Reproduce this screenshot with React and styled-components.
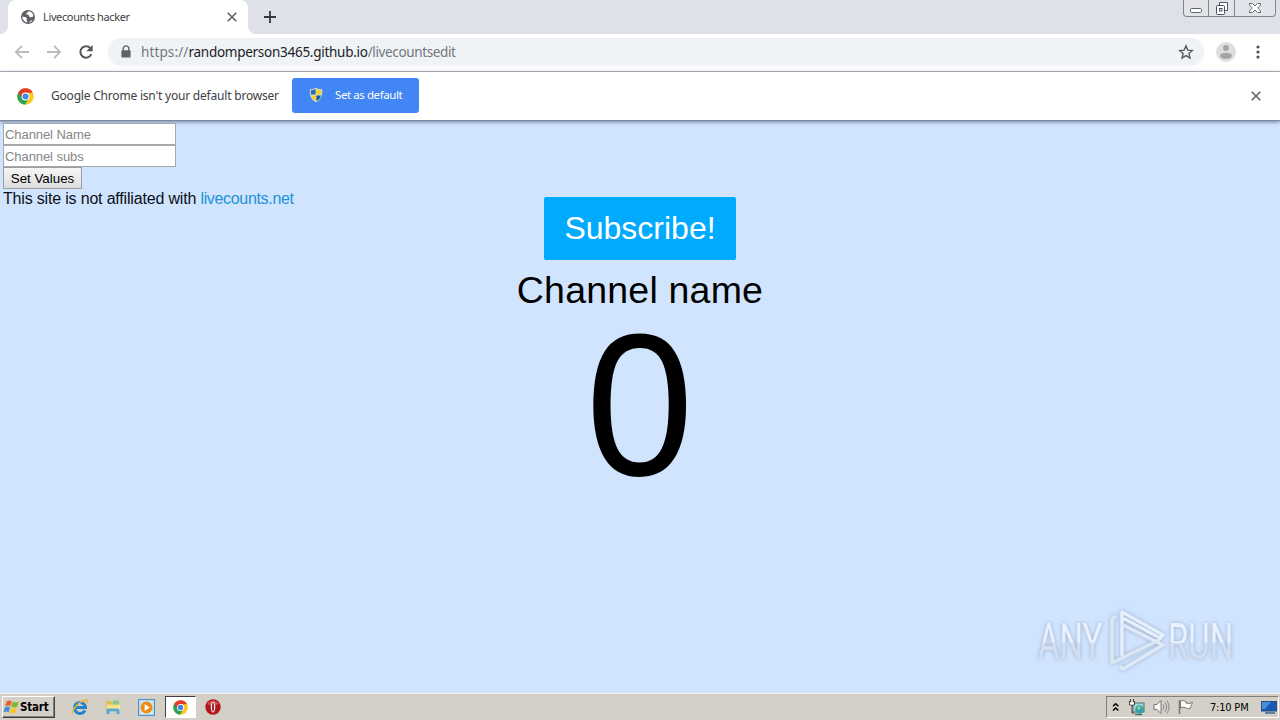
import React from 'react';
import styled, { createGlobalStyle } from 'styled-components';

const GlobalStyle = createGlobalStyle`
	* {
		box-sizing: border-box;
	}
	body {
		margin: 0;
		overflow: hidden;
		font-family: 'Liberation Sans', Arial, sans-serif;
	}
	svg {
		display: block;
		flex: none;
	}
`;

const Screen = styled.div`
	display: flex;
	flex-direction: column;
	width: 1280px;
	height: 720px;
	background: #d1e4fe;
`;

/* browser window */

const TabStrip = styled.div`
	display: flex;
	align-items: flex-start;
	height: 34px;
	background: #dee1e8;
`;

const TabCorner = styled.div`
	width: 8px;
	height: 34px;
	background: white;
`;

const CornerFill = styled.div`
	width: 8px;
	height: 34px;
	background: #dee1e8;
	border-bottom-right-radius: ${(props) => (props.$left ? '8px' : '0')};
	border-bottom-left-radius: ${(props) => (props.$left ? '0' : '8px')};
`;

const Tab = styled.div`
	display: flex;
	align-items: center;
	width: 240px;
	height: 34px;
	padding: 0 11px 0 12px;
	background: white;
	border-radius: 8px 8px 0 0;
`;

const TabTitle = styled.span`
	flex: 1;
	margin-left: 7px;
	font-family: 'Noto Sans', sans-serif;
	font-size: 11px;
	letter-spacing: -0.36px;
	line-height: 16px;
	color: #3c4043;
	white-space: nowrap;
`;

const NewTab = styled.div`
	display: flex;
	align-items: center;
	height: 34px;
	margin-left: 8px;
`;

const WindowButtons = styled.div`
	display: flex;
	height: 17px;
	margin-left: auto;
	margin-right: 4px;
	border: 1px solid #80868f;
	border-top: 0;
	border-radius: 0 0 4px 4px;
	background: #e2e4e9;
`;

const WindowButton = styled.div`
	display: flex;
	justify-content: center;
	width: ${(props) => props.$width}px;
	border-left: ${(props) => (props.$first ? '0' : '1px solid #80868f')};
`;

const Toolbar = styled.div`
	display: flex;
	align-items: center;
	height: 38px;
	padding: 0 14px 2px;
	background: white;
	border-bottom: 1px solid #b4b5b8;
`;

const NavIcon = styled.div`
	display: flex;
	width: 32px;
`;

const AddressBar = styled.div`
	display: flex;
	align-items: center;
	width: 1096px;
	height: 28px;
	margin-left: -2px;
	padding: 0 10px 0 12px;
	background: #f0f3f6;
	border-radius: 14px;
`;

const Url = styled.span`
	flex: 1;
	margin-left: 9px;
	font-family: 'Noto Sans', sans-serif;
	font-size: 13.5px;
	letter-spacing: -0.37px;
	line-height: 18px;
	color: #73777c;
	white-space: nowrap;
`;

const Scheme = styled.span`
	letter-spacing: 0.12px;
`;

const Host = styled.span`
	letter-spacing: -0.27px;
	color: #202124;
`;

const Profile = styled.div`
	display: flex;
	margin-left: 12px;
	margin-right: 20px;
`;

const InfoBar = styled.div`
	display: flex;
	align-items: center;
	height: 49px;
	padding: 0 19px 0 17px;
	background: white;
	border-bottom: 1px solid #80899a;
	box-shadow: 0 1px 4px rgba(40, 60, 100, 0.6);
`;

const InfoText = styled.span`
	width: 241px;
	margin-left: 17px;
	font-family: 'Noto Sans', sans-serif;
	font-size: 12px;
	letter-spacing: -0.2px;
	line-height: 18px;
	color: #3c4043;
	white-space: nowrap;
`;

const DefaultButton = styled.button`
	display: flex;
	align-items: center;
	width: 127px;
	height: 35px;
	margin-right: auto;
	margin-bottom: 2px;
	padding: 0 0 0 17px;
	border: 0;
	border-radius: 3px;
	background: #4285f4;
	color: white;
	font-family: 'Noto Sans', sans-serif;
	font-size: 11.5px;
	letter-spacing: -0.42px;
	white-space: nowrap;
`;

const ButtonLabel = styled.span`
	margin-left: 12px;
	margin-bottom: 2px;
`;

/* page content */

const Page = styled.main`
	position: relative;
	height: 572px;
	padding: 2px 3px 0;
`;

const Form = styled.form`
	display: flex;
	flex-direction: column;
	align-items: flex-start;
`;

const Field = styled.input`
	width: 173px;
	height: 22px;
	padding: 1px;
	border: 1px solid #a5a8ad;
	border-radius: 0;
	background: white;
	font-family: 'Liberation Sans', Arial, sans-serif;
	font-size: 13px;
	letter-spacing: -0.07px;
	&::placeholder {
		color: #858585;
	}
`;

const SetButton = styled.button`
	width: 79px;
	height: 22px;
	padding: 0;
	border: 1px solid #9c9ea2;
	border-radius: 0;
	background: linear-gradient(#f6f6f6, #dddddd);
	color: black;
	font-family: 'Liberation Sans', Arial, sans-serif;
	font-size: 13.33px;
	white-space: nowrap;
`;

const Notice = styled.div`
	font-size: 16px;
	line-height: 19px;
	letter-spacing: -0.18px;
	color: #0b1020;
`;

const Link = styled.a`
	letter-spacing: -0.33px;
	color: #1a93d8;
`;

const Counter = styled.section`
	display: flex;
	flex-direction: column;
	align-items: center;
	margin-top: -11px;
`;

const Subscribe = styled.button`
	width: 192px;
	height: 63px;
	padding: 0;
	border: 0;
	border-radius: 2px;
	background: #00aaff;
	color: white;
	font-family: 'Liberation Sans', Arial, sans-serif;
	font-size: 32px;
`;

const ChannelName = styled.div`
	margin-top: 9px;
	font-size: 37.5px;
	line-height: 43px;
	letter-spacing: 0.2px;
	color: black;
`;

const Count = styled.div`
	margin-top: -7px;
	font-size: 200px;
	line-height: 200px;
	color: black;
	transform: scale(0.97, 1.01);
`;

const Watermark = styled.div`
	position: absolute;
	left: 1038px;
	top: 489px;
	display: flex;
	align-items: center;
	height: 62px;
	filter: drop-shadow(0 0 2px rgba(110, 130, 165, 0.55));
`;

const WatermarkSlot = styled.div`
	display: flex;
	width: ${(props) => props.$width}px;
	margin-top: 2px;
`;

const WatermarkWord = styled.span`
	flex: none;
	font-family: Roboto, sans-serif;
	font-size: 50px;
	line-height: 62px;
	background: linear-gradient(#e9f2fe 50%, #d3dfef 52%);
	background-clip: text;
	color: transparent;
	transform: scaleX(${(props) => props.$scale});
	transform-origin: 0 50%;
`;

/* taskbar */

const Taskbar = styled.footer`
	display: flex;
	align-items: center;
	height: 27px;
	padding: 0 1px 0 1px;
	background: #d4d0c8;
	border-top: 1px solid #f2f1ed;
`;

const StartButton = styled.button`
	display: flex;
	align-items: center;
	width: 53px;
	height: 22px;
	margin-left: 1px;
	padding: 0;
	border: 1px solid;
	border-color: #ffffff #404040 #404040 #ffffff;
	box-shadow: inset -1px -1px 0 #808080;
	background: #d4d0c8;
	color: black;
	font-family: 'DejaVu Sans Condensed', 'DejaVu Sans', sans-serif;
	font-size: 11.5px;
	font-weight: bold;
	letter-spacing: -0.2px;
`;

const QuickLaunch = styled.div`
	display: flex;
	align-items: center;
	margin-left: 8px;
`;

const QuickItem = styled.div`
	display: flex;
	align-items: center;
	justify-content: center;
	width: ${(props) => (props.$active ? '31px' : '33.5px')};
	height: 22px;
	margin: 0 ${(props) => (props.$active ? '1px' : '0')};
	background: ${(props) => (props.$active ? 'white' : 'none')};
	border: ${(props) => (props.$active ? '1px solid #404040' : '0')};
	border-right-color: white;
	border-bottom-color: white;
`;

const Tray = styled.div`
	display: flex;
	align-items: center;
	width: 173px;
	height: 22px;
	margin-left: auto;
	padding-left: 5px;
	border: 1px solid;
	border-color: #808080 white white #808080;
`;

const TrayIcons = styled.div`
	display: flex;
	align-items: center;
	gap: 8px;
`;

const Clock = styled.span`
	width: 51px;
	margin-left: 15px;
	font-family: 'DejaVu Sans Condensed', sans-serif;
	font-size: 11px;
	letter-spacing: -0.2px;
	color: black;
	white-space: nowrap;
`;

const Cross = ({ size = 8, color = '#5f6368' }) => (
	<svg width={size} height={size} viewBox="0 0 8 8">
		<path d="M.6.6l6.8 6.8M7.4.6L.6 7.4" stroke={color} strokeWidth="1.3" />
	</svg>
);

const GlobeIcon = () => (
	<svg width="16" height="16" viewBox="0 0 16 16">
		<circle cx="8" cy="8" r="7" fill="#5c6065" />
		<path d="M8.5 2.2c-.5 1.7-2.3 1-2.2 2.6.1 1.3 1.7.4 2.5 1.4.7 1 .1 2 1.6 2 1.2 0 2-1.2 3.2-.7a5.7 5.7 0 0 0-3-4.8zM2.3 7.4c1.4.6 3.3.3 4.2 1.3.8.9-.4 2 .4 2.7.5.4.3 1.3.2 2A5.6 5.6 0 0 1 2.3 7.4zM9.2 13.7c.1-1.4 1.4-1.1 1.7-2.2l1.8-.6a6 6 0 0 1-3.5 2.8z" fill="white" />
	</svg>
);

const ArrowIcon = ({ flip }) => (
	<svg width="16" height="16" viewBox="0 0 16 16">
		<path d="M15 8H2M8 1.8L1.8 8 8 14.2" transform={flip ? 'matrix(-1 0 0 1 16 0)' : undefined} fill="none" stroke="#babcbe" strokeWidth="1.8" />
	</svg>
);

const ReloadIcon = () => (
	<svg width="16" height="16" viewBox="0 0 16 16">
		<path d="M13.3 10.2A5.7 5.7 0 1 1 12.2 4" fill="none" stroke="#505459" strokeWidth="2" />
		<path d="M14.6 1v6.2H8.4z" fill="#505459" />
	</svg>
);

const LockIcon = () => (
	<svg width="12" height="14" viewBox="0 0 12 14">
		<path d="M3.2 6V3.7a2.8 2.8 0 0 1 5.6 0V6" fill="none" stroke="#5f6368" strokeWidth="1.4" />
		<rect x="1.4" y="5.3" width="9.2" height="7.2" rx="1" fill="#5f6368" />
	</svg>
);

const StarIcon = () => (
	<svg width="16" height="16" viewBox="0 0 16 16">
		<path d="M8 1.9l1.8 4.2 4.6.4-3.5 3 1.1 4.5L8 11.6 4 14l1.1-4.5-3.5-3 4.6-.4z" fill="none" stroke="#565a60" strokeWidth="1.4" />
	</svg>
);

const ProfileIcon = () => (
	<svg width="20" height="20" viewBox="0 0 20 20">
		<circle cx="10" cy="10" r="10" fill="#dedede" />
		<circle cx="10" cy="6" r="3" fill="#a5a5a5" />
		<ellipse cx="10" cy="13.8" rx="6" ry="3.1" fill="#a5a5a5" />
	</svg>
);

const ChromeIcon = ({ size = 17 }) => (
	<svg width={size} height={size} viewBox="0 0 18 18">
		<circle cx="9" cy="9" r="8.7" fill="#fbc918" />
		<path d="M9 9L1.5 4.6A8.7 8.7 0 0 0 8.3 17.7L12.7 11z" fill="#26a45a" />
		<path d="M9 5h7.8A8.7 8.7 0 0 0 1.5 4.6l3.9 6.5z" fill="#e23b2e" />
		<circle cx="9" cy="9" r="4.2" fill="white" />
		<circle cx="9" cy="9" r="3.2" fill="#4285e8" />
	</svg>
);

const ShieldIcon = () => (
	<svg width="14" height="16" viewBox="0 0 14 16">
		<path d="M7 .7c2 1.3 4 1.5 6.2 1.5.4 6.2-1.3 10.5-6.2 13C2.1 12.7.4 8.4.8 2.2 3 2.2 5 2 7 .7z" fill="#d8dccc" />
		<path d="M6.6 2C5 2.900 3.500 3.200 1.900 3.300v4.300h4.700z" fill="#2668b8" />
		<path d="M7.400 2c1.600.9 3.100 1.200 4.700 1.300v4.300H7.400z" fill="#f6d022" />
		<path d="M6.600 8.400H2.100c.5 2.500 1.900 4.300 4.500 5.600z" fill="#f6d022" />
		<path d="M7.400 8.400h4.500c-.5 2.500-1.900 4.300-4.500 5.600z" fill="#1d549f" />
	</svg>
);

const PlayMark = () => (
	<svg width="60" height="64" viewBox="0 0 60 64">
		<g fill="none" strokeWidth="3.5" strokeLinejoin="round" strokeLinecap="round">
			<path d="M7 8L4 10V54L51 31" stroke="#dce7f5" />
			<path d="M14 46V3L55 26L52 29L17 10" stroke="#e6effc" />
			<path d="M15 16L55 36L15 60L13 58" stroke="#dfe9f7" />
		</g>
	</svg>
);

const WindowsFlag = () => (
	<svg width="17" height="16" viewBox="0 0 17 16">
		<path d="M3.5 2.5C5.500 1 7 1.300 8.700 2.300L7.300 7.300C5.600 6.300 4 6.300 2.100 7.400z" fill="#e9622c" />
		<path d="M9.600 2.700c2 1 3.700 1 6.100-.1l-1.500 5.200c-2 1-4 1-6 0z" fill="#7cb832" />
		<path d="M1.900 8.400c1.900-1.100 3.400-1.100 5.100-.1l-1.400 5c-1.700-1-3.300-1-5.200 0z" fill="#3f8fd8" />
		<path d="M7.900 8.800c2 1 4 1 6 0l-1.500 5c-2 1-4 1-6 0z" fill="#f6c52c" />
	</svg>
);

const IeIcon = () => (
	<svg width="18" height="18" viewBox="0 0 18 18">
		<path d="M14 12.300A5.500 5.500 0 1 1 14.500 9.500H4.500" fill="none" stroke="#2383ce" strokeWidth="3" />
		<path d="M2 16C-1 13.500 7 4.500 13.500 2c3-1 3.600.7 2.300 3" fill="none" stroke="#e8b92f" strokeWidth="1.400" />
	</svg>
);

const FolderIcon = () => (
	<svg width="18" height="18" viewBox="0 0 18 18">
		<path d="M2 3h5l1 1.500h7V13H2z" fill="#e0bf55" />
		<path d="M3 6.500h13V14H3z" fill="#f5e38f" />
		<path d="M9 2.500h6v4H9z" fill="#8cc88a" />
		<path d="M2.500 16v-3.500q0-2 2-2h9q2 0 2 2V16h-3v-2.500h-7V16z" fill="#58a9da" />
	</svg>
);

const MediaIcon = () => (
	<svg width="17" height="17" viewBox="0 0 17 17">
		<rect x=".5" y=".5" width="16" height="16" fill="#b7daf1" stroke="#548fc0" />
		<rect x="2.500" y="2.500" width="12" height="12" fill="#e0effa" />
		<circle cx="8.500" cy="8.500" r="6" fill="#ef8b17" />
		<path d="M6.700 5l5 3.500-5 3.500z" fill="white" />
	</svg>
);

const OperaIcon = () => (
	<svg width="16" height="16" viewBox="0 0 16 16">
		<circle cx="8" cy="8" r="7.700" fill="#b0141c" />
		<path d="M2 5a7 7 0 0 1 12 0q-6 3-12 0z" fill="#d04a50" />
		<ellipse cx="8" cy="8" rx="2.300" ry="5.600" fill="#f5e9e7" />
		<ellipse cx="8" cy="8" rx=".9" ry="4.500" fill="#8a1018" />
	</svg>
);

const TrayArrows = () => (
	<svg width="8" height="10" viewBox="0 0 8 10">
		<path d="M1 4.300l2.700-2.500 2.700 2.500M1 8.500L3.700 6l2.700 2.500" fill="none" stroke="black" strokeWidth="1.500" />
	</svg>
);

const NetworkIcon = () => (
	<svg width="17" height="17" viewBox="0 0 17 17">
		<rect x="5" y="4" width="11" height="9" fill="#a6d8d5" stroke="#4a6c70" />
		<path d="M7 15.500h7" stroke="#4a6c70" strokeWidth="1.500" />
		<circle cx="11.500" cy="10.500" r="4.300" fill="#35a1ad" />
		<path d="M9 9q2-3 4-1l-1 2-2 1z" fill="#92d497" />
		<path d="M1.500 2v4h5V2M4 6v8h2.500M2.500 0v3M5.500 0v3" fill="none" stroke="#454545" />
		<path d="M2 3.500h4v2H2z" fill="white" />
	</svg>
);

const SpeakerIcon = () => (
	<svg width="17" height="16" viewBox="0 0 17 16">
		<path d="M1 5.500h3L8 1.500v13l-4-4H1z" fill="#f7f7f5" stroke="#777" />
		<path d="M10 5.500q1.700 2.500 0 5M12 3.500q3.200 4.500 0 9M14 1.500q4 6.500 0 13" fill="none" stroke="#8a8986" />
	</svg>
);

const FlagIcon = () => (
	<svg width="17" height="16" viewBox="0 0 17 16">
		<path d="M1.500 1v14" stroke="#777" strokeWidth="1.500" />
		<path d="M2.500 2q3-1.500 5.500.5V4q3 1.200 6.500-.5-1 3-2.500 6-2.500 1-4.500-.8Q5 7.500 2.500 9z" fill="#fafaf8" stroke="#777" />
	</svg>
);

const MonitorIcon = () => (
	<svg width="16" height="15" viewBox="0 0 16 15">
		<rect x=".5" y="1.500" width="15" height="9.500" fill="#1757b7" stroke="#294d83" />
		<path d="M1 2h9L4 9H1z" fill="#4a8dda" />
		<path d="M4 13h10" stroke="#65809c" strokeWidth="2" />
	</svg>
);

const quickLaunch = [
	{ name: 'ie', icon: <IeIcon /> },
	{ name: 'explorer', icon: <FolderIcon /> },
	{ name: 'media', icon: <MediaIcon /> },
	{ name: 'chrome', icon: <ChromeIcon size={15} />, active: true },
	{ name: 'opera', icon: <OperaIcon /> }
];

const Browser = () => (
	<header>
		<TabStrip>
			<TabCorner><CornerFill $left /></TabCorner>
			<Tab>
				<GlobeIcon />
				<TabTitle>Livecounts hacker</TabTitle>
				<Cross size={10} />
			</Tab>
			<TabCorner><CornerFill /></TabCorner>
			<NewTab>
				<svg width="12" height="12" viewBox="0 0 12 12">
					<path d="M6 0v12M0 6h12" stroke="#35393e" strokeWidth="1.800" />
				</svg>
			</NewTab>
			<WindowButtons>
				<WindowButton $width={24} $first>
					<svg width="14" height="16" viewBox="0 0 14 16">
						<rect x="1.500" y="8.500" width="11" height="4" rx="1" fill="white" stroke="#5e6470" />
					</svg>
				</WindowButton>
				<WindowButton $width={26}>
					<svg width="14" height="16" viewBox="0 0 14 16">
						<path d="M4.500 5.500v-3h8v8h-3" fill="white" stroke="#4e5562" />
						<rect x="1.500" y="5.500" width="8" height="9" rx="1" fill="white" stroke="#4e5562" />
						<rect x="4.500" y="8.500" width="2.500" height="2.500" fill="none" stroke="#4e5562" />
					</svg>
				</WindowButton>
				<WindowButton $width={41}>
					<svg width="14" height="16" viewBox="0 0 14 16">
						<path d="M1.500 3.500h3L7 6l2.500-2.500h3v1.700L9.700 8l2.800 2.800v1.700h-3L7 10l-2.500 2.500h-3v-1.700L4.300 8 1.500 5.200z" fill="white" stroke="#666c77" />
					</svg>
				</WindowButton>
			</WindowButtons>
		</TabStrip>
		<Toolbar>
			<NavIcon><ArrowIcon /></NavIcon>
			<NavIcon><ArrowIcon flip /></NavIcon>
			<NavIcon><ReloadIcon /></NavIcon>
			<AddressBar>
				<LockIcon />
				<Url><Scheme>https://</Scheme><Host>randomperson3465.github.io</Host>/livecountsedit</Url>
				<StarIcon />
			</AddressBar>
			<Profile><ProfileIcon /></Profile>
			<svg width="4" height="14" viewBox="0 0 4 14" fill="#4d5157">
				<circle cx="2" cy="2" r="1.600" />
				<circle cx="2" cy="7" r="1.600" />
				<circle cx="2" cy="12" r="1.600" />
			</svg>
		</Toolbar>
		<InfoBar>
			<ChromeIcon />
			<InfoText>Google Chrome isn't your default browser</InfoText>
			<DefaultButton>
				<ShieldIcon />
				<ButtonLabel>Set as default</ButtonLabel>
			</DefaultButton>
			<Cross size={10} />
		</InfoBar>
	</header>
);

const LiveCounts = () => (
	<Page>
		<Form>
			<Field placeholder="Channel Name" />
			<Field placeholder="Channel subs" />
			<SetButton type="button">Set Values</SetButton>
		</Form>
		<Notice>This site is not affiliated with <Link>livecounts.net</Link></Notice>
		<Counter>
			<Subscribe>Subscribe!</Subscribe>
			<ChannelName>Channel name</ChannelName>
			<Count>0</Count>
		</Counter>
		<Watermark>
			<WatermarkSlot $width={70}>
				<WatermarkWord $scale={0.66}>ANY</WatermarkWord>
			</WatermarkSlot>
			<PlayMark />
			<WatermarkSlot $width={66}>
				<WatermarkWord $scale={0.66}>RUN</WatermarkWord>
			</WatermarkSlot>
		</Watermark>
	</Page>
);

export default function App() {
	return (
		<Screen>
			<GlobalStyle />
			<Browser />
			<LiveCounts />
			<Taskbar>
				<StartButton><WindowsFlag />Start</StartButton>
				<QuickLaunch>
					{quickLaunch.map((item) => (
						<QuickItem key={item.name} $active={item.active}>{item.icon}</QuickItem>
					))}
				</QuickLaunch>
				<Tray>
					<TrayIcons>
						<TrayArrows />
						<NetworkIcon />
						<SpeakerIcon />
						<FlagIcon />
					</TrayIcons>
					<Clock>7:10 PM</Clock>
					<MonitorIcon />
				</Tray>
			</Taskbar>
		</Screen>
	);
}
